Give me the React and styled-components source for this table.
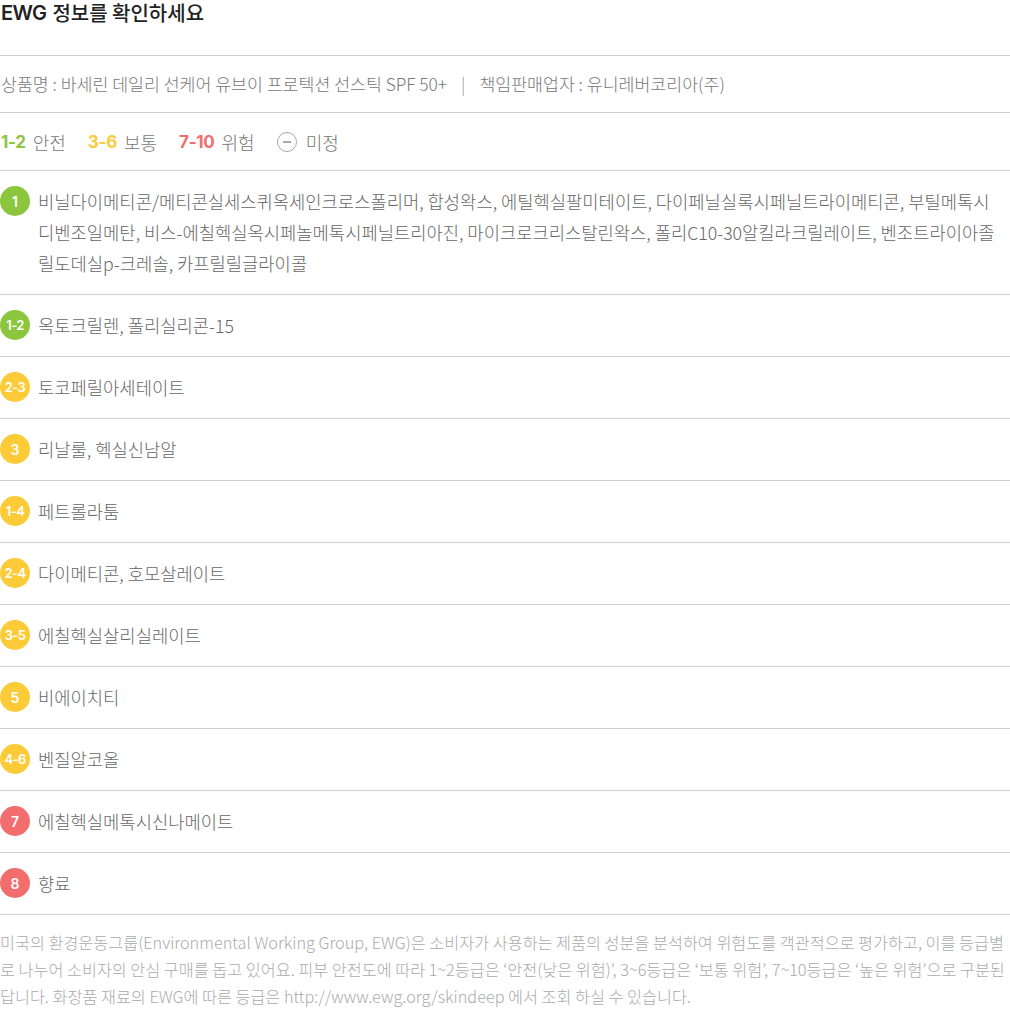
import styled, { createGlobalStyle } from "styled-components"

const GlobalStyle = createGlobalStyle`
  body {
    margin: 0;
    background: #fff;
    font-family: "Noto Sans CJK KR", "Noto Sans", sans-serif;
  }
`

const GREEN = "#8cc63f"
const YELLOW = "#fdcb38"
const RED = "#f26d6d"

const Page = styled.div`
  width: 1010px;
  font-weight: 300;
`

const Title = styled.h2`
  display: flex;
  align-items: center;
  gap: 6px;
  margin: -2px 0 0 0;
  height: 28px;
  padding: 1px 0 28px 1px;
  font-size: 20px;
  line-height: 28px;
  font-weight: 500;
  color: #222;
  border-bottom: 1px solid #cfcfcf;
`

const Latin = styled.span`
  font-family: "Inter", "Noto Sans", sans-serif;
  font-weight: 600;
  letter-spacing: -0.6px;
`

const InfoRow = styled.div`
  display: flex;
  align-items: center;
  height: 24px;
  padding: 16px 0 16px 1px;
  line-height: 24px;
  font-size: 17.3px;
  color: #777;
  border-bottom: 1px solid #cfcfcf;
`

const Divider = styled.span`
  margin: 0 14px;
  color: #999;
`

const Legend = styled.div`
  display: flex;
  align-items: center;
  gap: 22px;
  height: 24px;
  padding: 17px 0 16px 1px;
  line-height: 24px;
  border-bottom: 1px solid #cfcfcf;
`

const LegendItem = styled.div`
  display: flex;
  align-items: center;
  gap: 7px;
  font-size: 18px;
  color: #777;
`

const LegendNum = styled.span`
  font-family: "Inter", "Noto Sans", sans-serif;
  font-weight: 700;
  font-size: 17px;
  letter-spacing: -0.3px;
  color: ${(p) => p.$color};
`

const MinusIcon = styled.span`
  display: inline-flex;
  align-items: center;
  justify-content: center;
  box-sizing: border-box;
  width: 20px;
  height: 20px;
  margin-right: 2px;
  border: 1.5px solid #aaa;
  border-radius: 50%;
  &::after {
    content: "";
    width: 8px;
    height: 1.5px;
    background: #aaa;
  }
`

const Row = styled.div`
  display: flex;
  align-items: flex-start;
  gap: 8px;
  padding: 15px 0;
  border-bottom: 1px solid #cfcfcf;
`

const Badge = styled.span`
  flex: 0 0 30px;
  height: 30px;
  border-radius: 50%;
  background: ${(p) => p.$color};
  color: #fff;
  display: flex;
  align-items: center;
  justify-content: center;
  font-family: "Inter", "Noto Sans", sans-serif;
  font-weight: 600;
  font-size: ${(p) => (p.$long ? "13px" : "14px")};
  letter-spacing: ${(p) => (p.$long ? "-0.6px" : "0")};
`

const RowText = styled.div`
  padding-right: 10px;
  font-size: 17.7px;
  line-height: 31px;
  color: #666;
`

const Note = styled.p`
  margin: 0;
  padding: 14px 0 0 0;
  font-size: 16.25px;
  line-height: 27px;
  color: #aaa;
`

const ingredients = [
  {
    grade: "1",
    color: GREEN,
    name: "비닐다이메티콘/메티콘실세스퀴옥세인크로스폴리머, 합성왁스, 에틸헥실팔미테이트, 다이페닐실록시페닐트라이메티콘, 부틸메톡시디벤조일메탄, 비스-에칠헥실옥시페놀메톡시페닐트리아진, 마이크로크리스탈린왁스, 폴리C10-30알킬라크릴레이트, 벤조트라이아졸릴도데실p-크레솔, 카프릴릴글라이콜",
  },
  { grade: "1-2", color: GREEN, name: "옥토크릴렌, 폴리실리콘-15" },
  { grade: "2-3", color: YELLOW, name: "토코페릴아세테이트" },
  { grade: "3", color: YELLOW, name: "리날룰, 헥실신남알" },
  { grade: "1-4", color: YELLOW, name: "페트롤라툼" },
  { grade: "2-4", color: YELLOW, name: "다이메티콘, 호모살레이트" },
  { grade: "3-5", color: YELLOW, name: "에칠헥실살리실레이트" },
  { grade: "5", color: YELLOW, name: "비에이치티" },
  { grade: "4-6", color: YELLOW, name: "벤질알코올" },
  { grade: "7", color: RED, name: "에칠헥실메톡시신나메이트" },
  { grade: "8", color: RED, name: "향료" },
]

export default function App() {
  return (
    <Page>
      <GlobalStyle />
      <Title>
        <Latin>EWG</Latin>
        <span>정보를 확인하세요</span>
      </Title>
      <InfoRow>
        상품명 : 바세린 데일리 선케어 유브이 프로텍션 선스틱 SPF 50+
        <Divider>|</Divider>
        책임판매업자 : 유니레버코리아(주)
      </InfoRow>
      <Legend>
        <LegendItem>
          <LegendNum $color={GREEN}>1-2</LegendNum>안전
        </LegendItem>
        <LegendItem>
          <LegendNum $color={YELLOW}>3-6</LegendNum>보통
        </LegendItem>
        <LegendItem>
          <LegendNum $color={RED}>7-10</LegendNum>위험
        </LegendItem>
        <LegendItem>
          <MinusIcon />
          미정
        </LegendItem>
      </Legend>
      {ingredients.map((item) => (
        <Row key={item.grade + item.name}>
          <Badge $color={item.color} $long={item.grade.length > 1}>
            {item.grade}
          </Badge>
          <RowText>{item.name}</RowText>
        </Row>
      ))}
      <Note>
        미국의 환경운동그룹(Environmental Working Group, EWG)은 소비자가 사용하는 제품의 성분을 분석하여 위험도를 객관적으로 평가하고, 이를 등급별로 나누어 소비자의 안심 구매를 돕고 있어요. 피부 안전도에 따라 1~2등급은 ‘안전(낮은 위험)’, 3~6등급은 ‘보통 위험’, 7~10등급은 ‘높은 위험’으로 구분된답니다. 화장품 재료의 EWG에 따른 등급은 http://www.ewg.org/skindeep 에서 조회 하실 수 있습니다.
      </Note>
    </Page>
  )
}
